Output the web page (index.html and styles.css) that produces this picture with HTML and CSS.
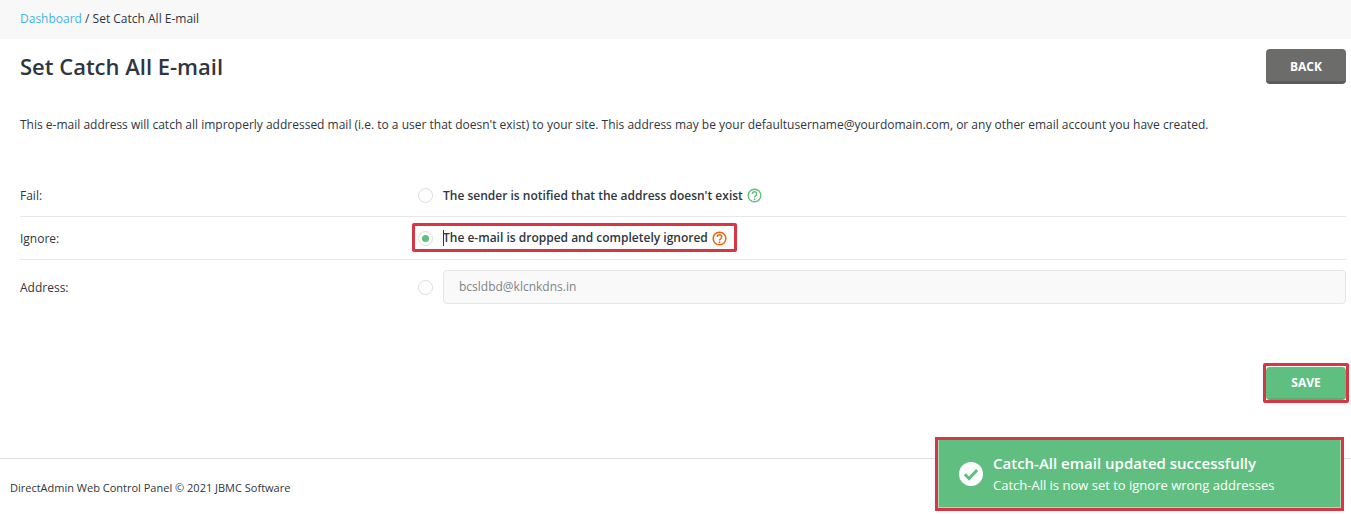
FILE: index.html
```html
<!DOCTYPE html>
<html lang="en">
<head>
<meta charset="utf-8">
<title>Set Catch All E-mail</title>
<link rel="stylesheet" href="styles.css">
</head>
<body>
<nav class="crumbs"><a href="#">Dashboard</a> / Set Catch All E-mail</nav>
<main class="content">
  <header class="head">
    <h1>Set Catch All E-mail</h1>
    <button class="btn btn-back">BACK</button>
  </header>
  <p class="intro">This e-mail address will catch all improperly addressed mail (i.e. to a user that doesn't exist) to your site. This address may be your defaultusername@yourdomain.com, or any other email account you have created.</p>
  <div class="form">
    <div class="row row-fail">
      <div class="label">Fail:</div>
      <div class="field">
        <span class="radio"></span>
        <span class="opt">The sender is notified that the address doesn't exist</span>
        <svg class="help" width="15" height="15" viewBox="0 0 15 15"><circle cx="7.5" cy="7.5" r="6.3" fill="none" stroke="#5fbf80" stroke-width="1.4"/><path d="M5.3 6a2.2 2.2 0 1 1 3.3 1.8c-.8.4-1.1.8-1.1 1.6" fill="none" stroke="#5fbf80" stroke-width="1.4"/><circle cx="7.5" cy="11.2" r=".9" fill="#5fbf80"/></svg>
      </div>
    </div>
    <div class="row row-ignore">
      <div class="label label-shift">Ignore:</div>
      <div class="field">
        <span class="radio on"></span>
        <span class="opt"><span class="caret"></span>The e-mail is dropped and completely ignored</span>
        <svg class="help" width="15" height="15" viewBox="0 0 15 15"><circle cx="7.5" cy="7.5" r="6.3" fill="none" stroke="#ea6510" stroke-width="1.5"/><path d="M5.3 6a2.2 2.2 0 1 1 3.3 1.8c-.8.4-1.1.8-1.1 1.6" fill="none" stroke="#ea6510" stroke-width="1.5"/><circle cx="7.5" cy="11.2" r=".9" fill="#ea6510"/></svg>
        <span class="mark mark-ignore"></span>
      </div>
    </div>
    <div class="row row-address">
      <div class="label label-shift">Address:</div>
      <div class="field">
        <span class="radio"></span>
        <div class="input">bcsldbd@klcnkdns.in</div>
      </div>
    </div>
  </div>
  <div class="actions">
    <button class="btn btn-save">SAVE<span class="mark mark-save"></span></button>
  </div>
</main>
<footer class="foot">DirectAdmin Web Control Panel © 2021 JBMC Software</footer>
<aside class="toast">
  <svg width="24" height="24" viewBox="0 0 24 24"><circle cx="12" cy="12" r="12" fill="#fff"/><path d="M5.8 12.3l4.3 4.3 8-8.6" fill="none" stroke="#60bf80" stroke-width="3"/></svg>
  <div>
    <div class="toast-title">Catch-All email updated successfully</div>
    <div class="toast-text">Catch-All is now set to ignore wrong addresses</div>
  </div>
</aside>
</body>
</html>
```
FILE: styles.css
```css
* { box-sizing: border-box; }
html, body { height: 514px; overflow: hidden; }
body { margin: 0; background: #fff; color: #2f3640; font: 12px/16px "Open Sans", sans-serif; position: relative; }
.crumbs { height: 39px; padding: 11px 20px 0; background: #f8f8f8; }
.crumbs a { color: #45b4ea; text-decoration: none; }
.content { padding: 0 5px 0 20px; }
.head { display: flex; justify-content: space-between; align-items: flex-start; height: 77px; padding-top: 10px; }
h1 { margin: -1px 0 0; font-size: 22px; font-weight: 600; line-height: 36px; }
.btn { width: 80px; border: 0; border-radius: 4px; color: #fff; font: 700 12px "Open Sans", sans-serif; position: relative; }
.btn-back { height: 35px; padding-top: 3px; background: #6c6d6b; border-bottom: 3px solid #5c5d5b; }
.intro { margin: 0; height: 59px; padding-top: 1px; line-height: 16px; }
.row { display: flex; align-items: center; border-bottom: 1px solid #e8e8e8; }
.row-fail { height: 42px; }
.row-ignore { height: 43px; }
.row-address { height: 54px; border-bottom: 0; }
.label { width: 398px; font-weight: 500; }
.label-shift { padding-top: 1px; }
.field { display: flex; align-items: center; flex: 1; position: relative; font-weight: 600; }
.radio { width: 15px; height: 15px; border: 1px solid #dcdcdc; border-radius: 50%; margin-right: 10px; background: #fff; position: relative; flex: none; }
.radio.on::after { content: ""; position: absolute; left: 3px; top: 3px; width: 7px; height: 7px; border-radius: 50%; background: #5fbf80; }
.opt { position: relative; }
.caret { position: absolute; left: 0; top: 0; width: 1px; height: 16px; background: #2f3640; }
.help { margin-left: 4px; }
.input { flex: 1; height: 34px; padding: 0 15px; line-height: 32px; border: 1px solid #e6e6e6; border-radius: 4px; background: #f9f9f9; color: #808488; font-weight: 400; }
.actions { display: flex; justify-content: flex-end; padding-top: 53px; }
.btn-save { height: 33px; background: #5fbf80; border-bottom: 2px solid #55b276; }
.mark { position: absolute; border: 3px solid #d93645; border-radius: 2px; pointer-events: none; }
.mark-ignore { left: -6px; top: -7px; width: 325px; height: 29px; }
.mark-save { left: -3px; top: -4px; width: 86px; height: 40px; }
.foot { position: absolute; left: 0; right: 0; top: 458px; height: 56px; padding: 21px 10px 0; border-top: 1px solid #e2e2e2; font-size: 11px; }
.toast { position: absolute; left: 938px; top: 440px; width: 403px; height: 68px; display: flex; align-items: center; gap: 10px; padding-left: 20px; background: #60bf80; color: #fff; outline: 3px solid #d93645; border: 1px solid #a9dcbb; border-top: 0; }
.toast-title { font-size: 15px; font-weight: 600; line-height: 20px; }
.toast-text { font-size: 13px; line-height: 18px; margin-top: 3px; }
```
